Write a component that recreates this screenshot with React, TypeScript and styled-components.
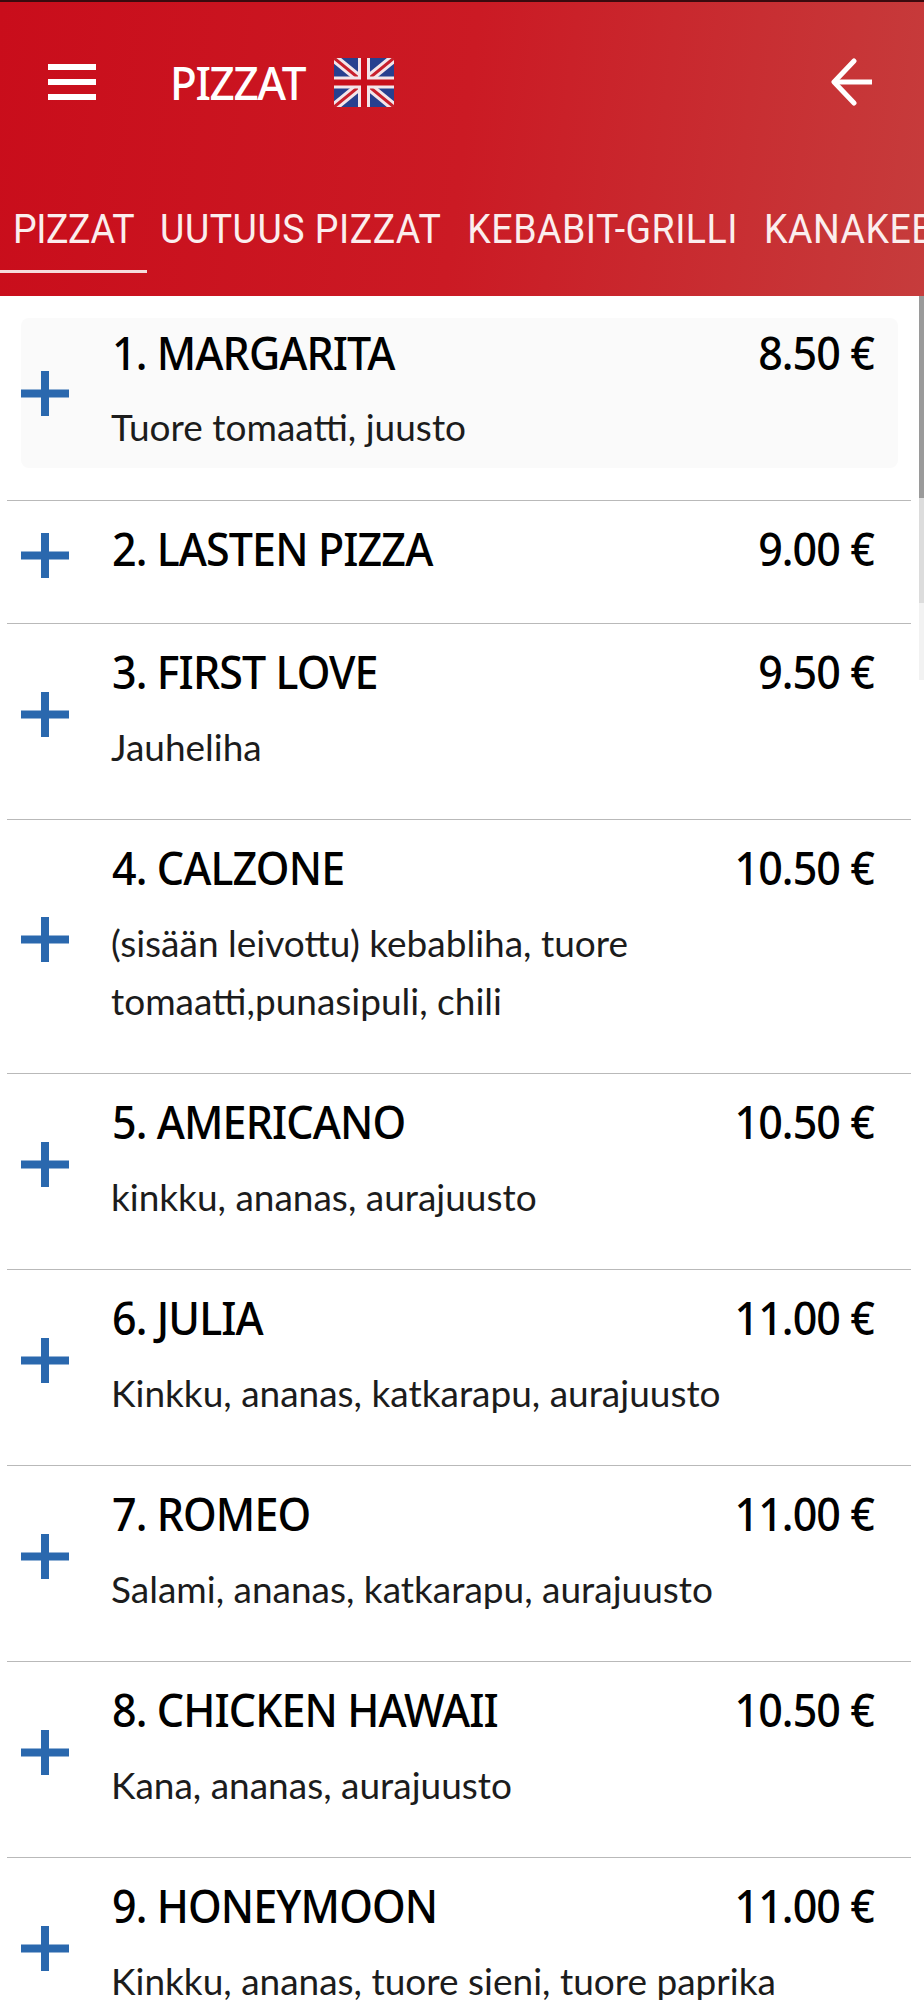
import React from 'react';
import styled, { createGlobalStyle } from 'styled-components';

const pizzas = [
  { name: '1. MARGARITA', price: '8.50 €', info: 'Tuore tomaatti, juusto' },
  { name: '2. LASTEN PIZZA', price: '9.00 €' },
  { name: '3. FIRST LOVE', price: '9.50 €', info: 'Jauheliha' },
  { name: '4. CALZONE', price: '10.50 €', info: '(sisään leivottu) kebabliha, tuore tomaatti,punasipuli, chili' },
  { name: '5. AMERICANO', price: '10.50 €', info: 'kinkku, ananas, aurajuusto' },
  { name: '6. JULIA', price: '11.00 €', info: 'Kinkku, ananas, katkarapu, aurajuusto' },
  { name: '7. ROMEO', price: '11.00 €', info: 'Salami, ananas, katkarapu, aurajuusto' },
  { name: '8. CHICKEN HAWAII', price: '10.50 €', info: 'Kana, ananas, aurajuusto' },
  { name: '9. HONEYMOON', price: '11.00 €', info: 'Kinkku, ananas, tuore sieni, tuore paprika' },
];

const tabs = ['PIZZAT', 'UUTUUS PIZZAT', 'KEBABIT-GRILLI', 'KANAKEBAB'];

const App = () => {
  return (
    <Page>
      <GlobalStyle />
      <Header>
        <TopBar>
          <svg width="48" height="36" viewBox="0 0 48 36" fill="#fff">
            <rect y="0" width="48" height="6" />
            <rect y="15" width="48" height="6" />
            <rect y="30" width="48" height="6" />
          </svg>
          <PageTitle>PIZZAT</PageTitle>
          <svg width="60" height="49" viewBox="0 0 60 49">
            <rect width="60" height="49" fill="#27408f" />
            <path d="M0 0L60 49M60 0L0 49" stroke="#f3e6ea" strokeWidth="9" />
            <path d="M0 0L60 49M60 0L0 49" stroke="#c8202c" strokeWidth="3" />
            <path d="M30 0V49M0 24.5H60" stroke="#f3e6ea" strokeWidth="12" />
            <path d="M30 0V49M0 24.5H60" stroke="#c8101c" strokeWidth="6" />
          </svg>
          <BackIcon width="42" height="48" viewBox="0 0 42 48" fill="none" stroke="#fff" strokeWidth="5">
            <path d="M3 24H41" />
            <path d="M23 3L3 24L23 45" strokeLinecap="round" strokeLinejoin="round" />
          </BackIcon>
        </TopBar>
        <TabBar>
          {tabs.map((tab, i) => (
            <Tab key={tab} $active={i === 0}>
              <span>{tab}</span>
            </Tab>
          ))}
        </TabBar>
      </Header>
      <List>
        {pizzas.map((pizza, i) => (
          <Row key={pizza.name} $first={i === 0}>
            <Content $first={i === 0}>
              <svg width="48" height="45" viewBox="0 0 48 45" fill="#2a68ae">
                <rect y="18.5" width="48" height="8" />
                <rect x="20" width="8" height="45" />
              </svg>
              <Body>
                <TitleRow>
                  <Name>{pizza.name}</Name>
                  <Price>{pizza.price}</Price>
                </TitleRow>
                {pizza.info && <Info>{pizza.info}</Info>}
              </Body>
            </Content>
          </Row>
        ))}
      </List>
      <ScrollThumb />
    </Page>
  );
};

export default App;

// styled
const GlobalStyle = createGlobalStyle`
  body {
    margin: 0;
    background: #fff;
    font-family: Lato, "Noto Sans", sans-serif;
  }
`;

const Page = styled.div`
  position: relative;
  width: 924px;
  height: 2000px;
  overflow: hidden;
`;

const Header = styled.header`
  height: 296px;
  box-sizing: border-box;
  border-top: 2px solid #3a0a0e;
  background: linear-gradient(97deg, #c90d1b 0%, #cb1a24 50%, #c63c3c 100%);
  color: #fff;
`;

const TopBar = styled.div`
  display: flex;
  align-items: center;
  height: 160px;
  padding: 0 51px 0 48px;
`;

const PageTitle = styled.h1`
  margin: 0 29px 0 74px;
  font-family: "Noto Sans", sans-serif;
  font-size: 44px;
  font-weight: 500;
  letter-spacing: -1.4px;
  transform: scaleY(1.05);
`;

const BackIcon = styled.svg`
  margin-left: auto;
`;

const TabBar = styled.nav`
  display: flex;
  height: 111px;
  overflow: hidden;
  white-space: nowrap;
`;

const Tab = styled.div<{ $active?: boolean }>`
  flex: none;
  height: 111px;
  box-sizing: border-box;
  padding: 0 13px;
  display: flex;
  align-items: flex-start;
  border-bottom: 3px solid ${(p) => (p.$active ? '#f6dcdc' : 'transparent')};
  font-family: Roboto, sans-serif;
  font-size: 37.5px;
  font-weight: 400;
  letter-spacing: ${(p) => (p.$active ? '-0.4px' : '0.5px')};

  span {
    display: block;
    line-height: 50px;
    margin-top: 42px;
    color: #fbeeee;
    transform: scaleY(1.1);
  }
`;

const List = styled.main``;

const Name = styled.div`
  font-family: "Noto Sans", sans-serif;
  font-size: 43px;
  font-weight: 500;
  letter-spacing: -0.9px;
  color: #000;
  transform: scaleY(1.05);
  transform-origin: left center;
`;

const Price = styled(Name)`
  transform-origin: right center;
`;

const Info = styled.p`
  margin: 0 0 15px -1px;
  font-size: 37px;
  line-height: 58px;
  color: #1c1c1c;
`;

const TitleRow = styled.div`
  display: flex;
  justify-content: space-between;
  align-items: center;
  height: 50px;
  margin: 8px 0 22px;
`;

const Row = styled.section<{ $first?: boolean }>`
  margin: 0 13px 0 7px;
  padding: ${(p) => (p.$first ? '22px 0 32px' : '14px 0 28px')};
  border-bottom: 1px solid #b9b9b9;
`;

const Content = styled.div<{ $first?: boolean }>`
  display: flex;
  align-items: center;
  gap: 43px;
  margin: 0 13px 0 14px;
  border-radius: 8px;
  background: ${(p) => (p.$first ? '#fafafa' : 'transparent')};
  ${(p) =>
    p.$first &&
    `
    padding: 2px 0;
    ${TitleRow} { margin: 7px 0 21px; }
    ${Info} { margin-bottom: 10px; }
  `}
`;

const Body = styled.div`
  flex: 1;
  min-width: 0;
  padding-right: 24px;
`;

const ScrollThumb = styled.div`
  position: absolute;
  top: 296px;
  right: 0;
  width: 5px;
  height: 384px;
  background: linear-gradient(#9a9a9a 0 202px, #dcdcdc 202px 307px, #f2f2f2 307px);
`;
